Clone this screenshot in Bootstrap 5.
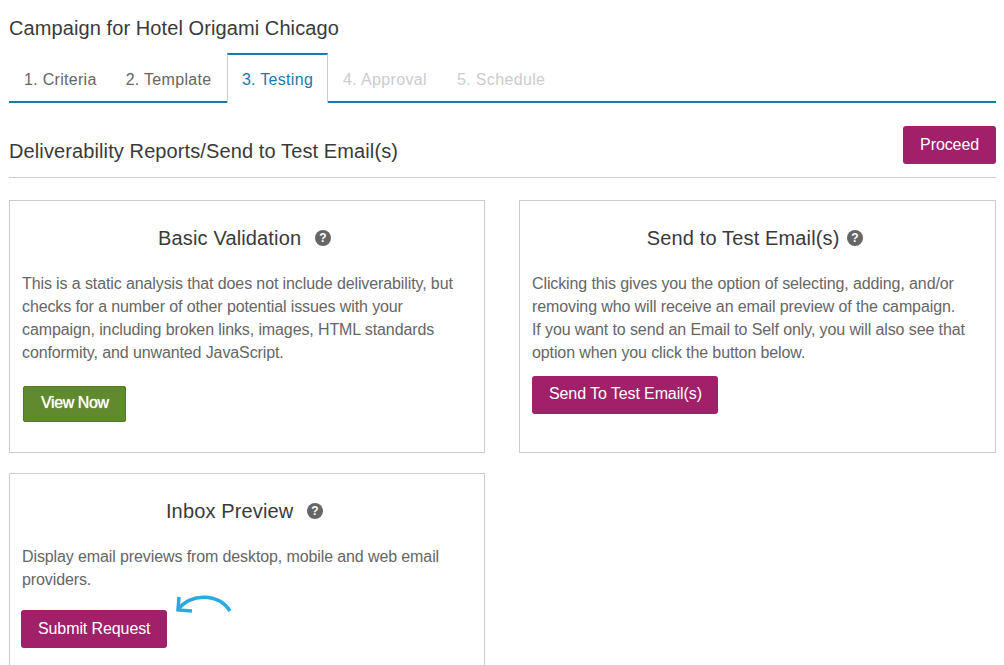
<!DOCTYPE html>
<html lang="en">
<head>
  <meta charset="UTF-8" />
  <meta name="viewport" content="width=device-width, initial-scale=1.0"/>
  <title>Campaign for Hotel Origami Chicago</title>
  <link href="https://cdn.jsdelivr.net/npm/bootstrap@5.3.2/dist/css/bootstrap.min.css" rel="stylesheet">
  <style>
    html, body { height: 665px; overflow: hidden; }
    body { font-family: "Liberation Sans", Arial, sans-serif; font-size: 16px; color: #333; background: #fff; }
    .page-wrap { padding: 0 8px 0 9px; }
    .camp-title { font-size: 20px; line-height: 23px; font-weight: 400; color: #3a3a3a; margin: 0; padding-top: 17px; height: 53px; letter-spacing: .09px; }

    .step-tabs { border-bottom: 2px solid #1a7ba6; height: 50px; flex-wrap: nowrap; }
    .step-tabs .nav-link { border: 0; border-radius: 0; color: #666; padding: 15px 14px 0 15px; height: 50px; line-height: 23px; margin: 0; background: none; letter-spacing: .3px; }
    .step-tabs .nav-item:nth-child(2) { margin-right: 1.5px; }
    .step-tabs .nav-link.active { color: #1a7ba6; background: #fff; border: 1px solid #ccc; border-top: 2px solid #1a7ba6; border-bottom: 0; height: 50px; padding: 13px 14px 0 14px; }
    .step-tabs .nav-link.disabled { color: #ccc; padding-right: 15px; letter-spacing: .35px; }

    .section-head { height: 75px; border-bottom: 1px solid #ccc; margin-bottom: 22px; padding-top: 23px; }
    .section-head h2 { font-size: 20px; line-height: 23px; font-weight: 400; color: #3a3a3a; margin: 14px 0 0; letter-spacing: .11px; }

    .btn-plum { background: #a02069; border: 0; color: #fff; font-size: 16px; line-height: 22px; padding: 8px 17px; border-radius: 3px; letter-spacing: -.1px; }
    .btn-plum:hover { background: #a02069; color: #fff; }
    .btn-leaf { background: #5f8a2d; border: 1px solid #527a25; color: #fff; font-size: 16px; line-height: 22px; padding: 5px 16px 7px 17px; border-radius: 2px; height: 36px; text-shadow: 0 0 1px #fff; letter-spacing: -.4px; }
    .btn-leaf:hover { background: #5f8a2d; color: #fff; }

    .test-grid { display: grid; grid-template-columns: 476px 477px; column-gap: 34px; row-gap: 20px; }
    .test-box { border: 1px solid #ccc; border-radius: 0; padding: 0 12px; position: relative; }
    .box-tall { height: 253px; }
    .box-last { height: 192px; border-bottom: 0; }
    .box-title { font-size: 20px; line-height: 23px; font-weight: 400; color: #3a3a3a; text-align: center; margin: 26px 0 22px; padding-right: 5px; letter-spacing: .14px; }
    .box-title svg { vertical-align: -1px; }
    .box-text { color: #666; line-height: 23px; margin: 0; letter-spacing: -.11px; }
    .curve-arrow { position: absolute; left: 164px; top: 120px; }
    .view-btn { margin-top: 22px; margin-left: 1px; }
    .send-btn { margin-top: 12px; padding: 7px 16px 9px 17px; }
    .inbox-btn { margin-top: 19px; margin-left: -1px; }
    .send-icon { margin-left: 2px; }
  </style>
</head>

<body>
  <div class="page-wrap">
    <h1 class="camp-title">Campaign for Hotel Origami Chicago</h1>

    <ul class="nav nav-tabs step-tabs">
      <li class="nav-item"><a class="nav-link" href="#">1. Criteria</a></li>
      <li class="nav-item"><a class="nav-link" href="#">2. Template</a></li>
      <li class="nav-item"><a class="nav-link active" href="#">3. Testing</a></li>
      <li class="nav-item"><a class="nav-link disabled" href="#">4. Approval</a></li>
      <li class="nav-item"><a class="nav-link disabled" href="#">5. Schedule</a></li>
    </ul>

    <div class="section-head d-flex justify-content-between align-items-start">
      <h2>Deliverability Reports/Send to Test Email(s)</h2>
      <button class="btn btn-plum" type="button">Proceed</button>
    </div>

    <div class="test-grid">
      <div class="test-box box-tall">
        <h3 class="box-title">Basic Validation <svg class="ms-2" width="16" height="16" viewBox="0 0 16 16"><circle cx="8" cy="8" r="8" fill="#666"/><text x="8" y="12" text-anchor="middle" font-family="Liberation Sans, sans-serif" font-size="12" font-weight="700" fill="#fff">?</text></svg></h3>
        <p class="box-text">This is a static analysis that does not include deliverability, but checks for a number of other potential issues with your campaign, including broken links, images, HTML standards conformity, and unwanted JavaScript.</p>
        <button class="btn btn-leaf view-btn" type="button">View Now</button>
      </div>

      <div class="test-box box-tall">
        <h3 class="box-title">Send to Test Email(s) <svg class="send-icon" width="16" height="16" viewBox="0 0 16 16"><circle cx="8" cy="8" r="8" fill="#666"/><text x="8" y="12" text-anchor="middle" font-family="Liberation Sans, sans-serif" font-size="12" font-weight="700" fill="#fff">?</text></svg></h3>
        <p class="box-text">Clicking this gives you the option of selecting, adding, and/or removing who will receive an email preview of the campaign.<br>If you want to send an Email to Self only, you will also see that option when you click the button below.</p>
        <button class="btn btn-plum send-btn" type="button">Send To Test Email(s)</button>
      </div>

      <div class="test-box box-last">
        <h3 class="box-title">Inbox Preview <svg class="ms-2" width="16" height="16" viewBox="0 0 16 16"><circle cx="8" cy="8" r="8" fill="#666"/><text x="8" y="12" text-anchor="middle" font-family="Liberation Sans, sans-serif" font-size="12" font-weight="700" fill="#fff">?</text></svg></h3>
        <p class="box-text">Display email previews from desktop, mobile and web email providers.</p>
        <button class="btn btn-plum inbox-btn" type="button">Submit Request</button>
        <svg class="curve-arrow" width="58" height="20" viewBox="0 0 58 20" fill="none" stroke="#29abe2" stroke-width="3.5">
          <path d="M56 17 C46 1 20 -3 4 15"/>
          <path d="M5 3 L4 16 L18 17"/>
        </svg>
      </div>
    </div>
  </div>
  <script src="https://cdn.jsdelivr.net/npm/bootstrap@5.3.2/dist/js/bootstrap.bundle.min.js"></script>
</body>
</html>
